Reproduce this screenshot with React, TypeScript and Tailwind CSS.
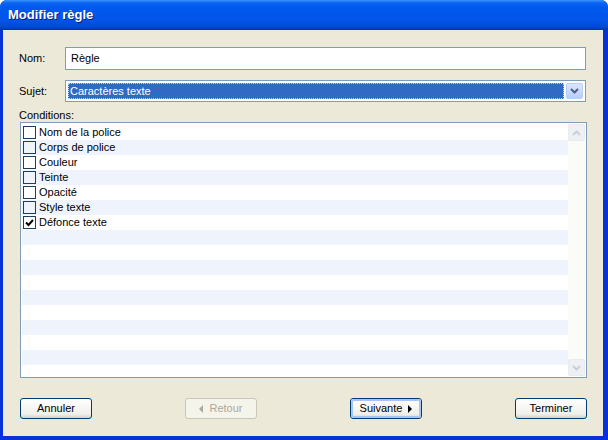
import React from "react";

const items = [
  { label: "Nom de la police", checked: false },
  { label: "Corps de police", checked: false },
  { label: "Couleur", checked: false },
  { label: "Teinte", checked: false },
  { label: "Opacité", checked: false },
  { label: "Style texte", checked: false },
  { label: "Défonce texte", checked: true },
];

function Chevron({ up, color }: { up?: boolean; color: string }) {
  return (
    <svg width="9" height="6" viewBox="0 0 9 6">
      <path
        d={up ? "M1 5 L4.5 1.5 L8 5" : "M1 1 L4.5 4.5 L8 1"}
        fill="none"
        stroke={color}
        strokeWidth="2"
      />
    </svg>
  );
}

function Button({ children, disabled, focused }: { children: React.ReactNode; disabled?: boolean; focused?: boolean }) {
  return (
    <div
      className={
        "w-[72px] h-[21px] rounded-[3px] border flex items-center justify-center " +
        (disabled
          ? "border-[#c9c7ba] bg-[#f5f4ea] text-[#aca899]"
          : "border-[#003c74] bg-[linear-gradient(#ffffff,#f0f0ea_80%,#d6d0c5)] text-black")
      }
    >
      <div
        className={
          "w-full h-full flex items-center justify-center gap-[6px] rounded-[2px] " +
          (focused ? "border-2 border-[#a8c4f0]" : "")
        }
      >
        {children}
      </div>
    </div>
  );
}

export default function App() {
  const rows = Array.from({ length: 17 });
  return (
    <div
      className="w-[608px] h-[440px] flex flex-col bg-[#0831d9] rounded-t-[7px] overflow-hidden text-[11px]"
      style={{ fontFamily: '"Liberation Sans", Arial, sans-serif' }}
    >
      {/* title bar */}
      <div className="h-[30px] shrink-0 flex items-center pl-[8px] bg-[linear-gradient(#3d95ff_0px,#0a64f0_3px,#0058ee_8px,#0454e8_20px,#0349d6_27px,#0331b8_30px)]">
        <span className="text-white font-bold text-[13px] [text-shadow:1px_1px_#0a1e6e]">Modifier règle</span>
      </div>

      {/* body */}
      <div className="flex-1 ml-[3px] mr-[5px] mb-[4px] bg-[#ece9d8] flex flex-col pl-[16px] pr-[16px] pt-[17px] text-black">
        <div className="flex items-center">
          <span className="w-[46px]">Nom:</span>
          <div className="flex-1 h-[23px] mr-[1px] border border-[#7f9db9] bg-white flex items-center pl-[5px]">Règle</div>
        </div>

        <div className="flex items-center mt-[10px]">
          <span className="w-[46px]">Sujet:</span>
          <div className="flex-1 h-[22px] mr-[1px] border border-[#7f9db9] bg-white flex items-center p-[2px]">
            <div className="flex-1 h-full bg-[#316ac5] border border-dotted border-[#c5d5f0] text-white flex items-center pl-[1px]">
              Caractères texte
            </div>
            <div className="w-[17px] h-full ml-[2px] rounded-[2px] bg-[linear-gradient(#dae6fe,#b9cdfa)] border border-[#b9cdfa] flex items-center justify-center">
              <Chevron color="#4d6185" />
            </div>
          </div>
        </div>

        <div className="mt-[7px] leading-[13px]">Conditions:</div>
        <div className="h-[256px] ml-[1px] border border-[#7f9db9] bg-white flex p-[1px]">
          <div className="flex-1 flex flex-col pt-[1px] overflow-hidden">
            {rows.map((_, i) => {
              const it = items[i];
              return (
                <div
                  key={i}
                  className={"h-[15px] shrink-0 flex items-center pl-[1px] " + (i % 2 === 1 ? "bg-[#eef3fc]" : "bg-white")}
                >
                  {it && (
                    <>
                      <div className="w-[13px] h-[13px] border border-[#1c3e60] flex items-center justify-center">
                        {it.checked && (
                          <svg width="9" height="8" viewBox="0 0 9 8">
                            <path d="M1 3.5 L3.5 6 L8 1" fill="none" stroke="#000" strokeWidth="2" />
                          </svg>
                        )}
                      </div>
                      <span className="ml-[3px]">{it.label}</span>
                    </>
                  )}
                </div>
              );
            })}
          </div>
          <div className="w-[17px] flex flex-col justify-between bg-[#fbfbf8]">
            <div className="h-[17px] rounded-[2px] border border-[#e8ebef] bg-[#eef0f3] flex items-center justify-center">
              <Chevron up color="#c9d0d8" />
            </div>
            <div className="h-[17px] rounded-[2px] border border-[#e8ebef] bg-[#eef0f3] flex items-center justify-center">
              <Chevron color="#c9d0d8" />
            </div>
          </div>
        </div>

        <div className="flex items-center gap-[93px] mt-[20px] pl-[1px]">
          <Button>Annuler</Button>
          <Button disabled>
            <svg width="4" height="8" viewBox="0 0 4 8"><path d="M4 0 L0 4 L4 8 Z" fill="#aca899" /></svg>
            <span>Retour</span>
          </Button>
          <Button focused>
            <span>Suivante</span>
            <svg width="4" height="8" viewBox="0 0 4 8"><path d="M0 0 L4 4 L0 8 Z" fill="#000" /></svg>
          </Button>
          <Button>Terminer</Button>
        </div>
      </div>
    </div>
  );
}
